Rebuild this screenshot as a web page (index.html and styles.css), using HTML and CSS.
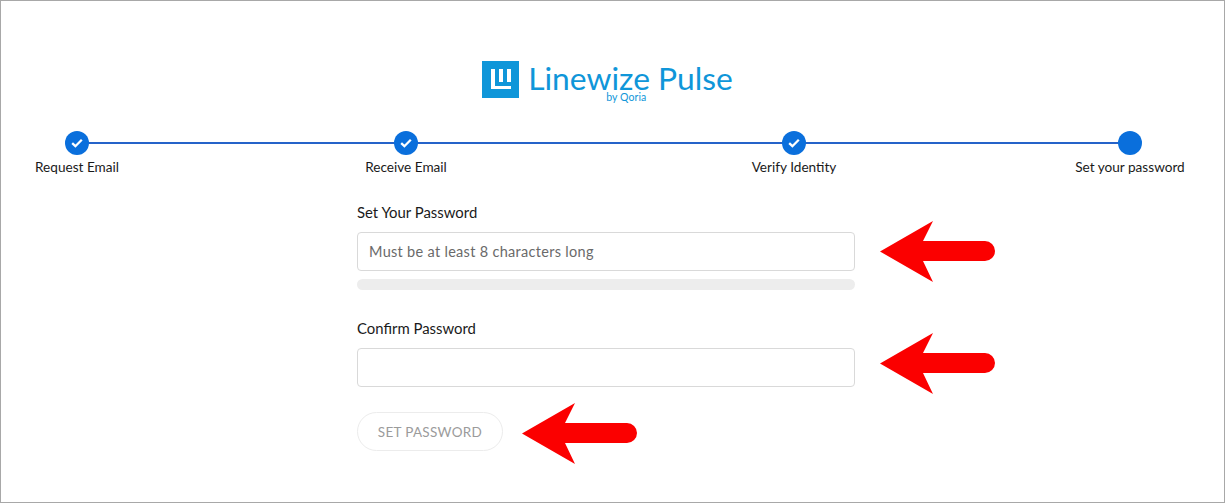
FILE: index.html
```html
<!DOCTYPE html>
<html lang="en">
<head>
<meta charset="utf-8">
<title>Set your password</title>
<link rel="stylesheet" href="styles.css">
</head>
<body>
<div class="frame">
  <header class="brand">
    <svg class="brand-mark" viewBox="0 0 37 37" aria-hidden="true">
      <rect width="37" height="37" fill="#0f96d9"/>
      <path d="M9 8h4v17h16v3H9z M17 8h4v13h-4z M25 8h4v13h-4z" fill="#fff"/>
    </svg>
    <div class="brand-text">
      <div class="brand-name">Linewize Pulse</div>
      <div class="brand-by">by Qoria</div>
    </div>
  </header>

  <ol class="stepper">
    <li class="step">
      <span class="dot"><svg viewBox="0 0 12 10"><path d="M1.2 5.2 4.4 8.2 10.8 1.8" fill="none" stroke="#fff" stroke-width="2.3"/></svg></span>
      <span class="step-label">Request Email</span>
    </li>
    <li class="step step-b">
      <span class="dot"><svg viewBox="0 0 12 10"><path d="M1.2 5.2 4.4 8.2 10.8 1.8" fill="none" stroke="#fff" stroke-width="2.3"/></svg></span>
      <span class="step-label">Receive Email</span>
    </li>
    <li class="step step-c">
      <span class="dot"><svg viewBox="0 0 12 10"><path d="M1.2 5.2 4.4 8.2 10.8 1.8" fill="none" stroke="#fff" stroke-width="2.3"/></svg></span>
      <span class="step-label">Verify Identity</span>
    </li>
    <li class="step step-d">
      <span class="dot"></span>
      <span class="step-label">Set your password</span>
    </li>
  </ol>

  <form class="form">
    <label class="field-label" for="pw">Set Your Password</label>
    <input class="input" id="pw" type="text" placeholder="Must be at least 8 characters long">
    <div class="meter"></div>
    <label class="field-label second" for="cpw">Confirm Password</label>
    <input class="input" id="cpw" type="text">
    <button class="submit" type="button">SET PASSWORD</button>
  </form>

  <svg class="arrow arrow-1" viewBox="0 0 115 61" aria-hidden="true"><path d="M0 30.5 53 0 43 20H105a10 10 0 0 1 0 20H43L53 61z" fill="#fb0000"/></svg>
  <svg class="arrow arrow-2" viewBox="0 0 115 61" aria-hidden="true"><path d="M0 30.5 53 0 43 20H105a10 10 0 0 1 0 20H43L53 61z" fill="#fb0000"/></svg>
  <svg class="arrow arrow-3" viewBox="0 0 115 61" aria-hidden="true"><path d="M0 30.5 53 0 43 20H105a10 10 0 0 1 0 20H43L53 61z" fill="#fb0000"/></svg>
</div>
</body>
</html>
```
FILE: styles.css
```css
* { box-sizing: border-box; }
html, body { margin: 0; padding: 0; background: #fff; }
body { font-family: "Lato", "Noto Sans", sans-serif; color: #1a1a1a; }
.frame {
  position: relative;
  width: 1225px;
  height: 503px;
  border: 1px solid #a8a8a8;
  overflow: hidden;
  padding-top: 60px;
}
.brand { display: flex; justify-content: center; gap: 9px; margin-left: -10px; height: 48px; }
.brand-mark { width: 37px; height: 37px; flex: none; }
.brand-text { display: flex; flex-direction: column; color: #0f96d9; font-family: "Lato", sans-serif; }
.brand-name { font-size: 31.8px; line-height: 34px; font-weight: 400; white-space: nowrap; }
.brand-by { font-size: 10.5px; line-height: 9px; font-weight: 400; letter-spacing: .1px; margin: -2px 0 0 77px; padding-left: 1px; }
.stepper {
  position: relative;
  list-style: none;
  display: flex;
  margin: 22px 0 0;
  padding: 0 0 0 21px;
}
.stepper::before {
  content: "";
  position: absolute;
  left: 76px;
  top: 11px;
  width: 1053px;
  height: 2px;
  background: #2563c9;
}
.step { position: relative; width: 110px; display: flex; flex-direction: column; align-items: center; }
.step-b { margin-left: 219px; }
.step-c { margin-left: 278px; }
.step-d { margin-left: 226px; }
.dot {
  width: 24px;
  height: 24px;
  border-radius: 50%;
  background: #0a6fdc;
  display: flex;
  align-items: center;
  justify-content: center;
}
.dot svg { width: 12px; height: 10px; }
.step-label { margin-top: 2px; font-size: 13.6px; line-height: 20px; white-space: nowrap; }
.form { width: 498px; margin: 25px 0 0 356px; display: flex; flex-direction: column; align-items: flex-start; }
.field-label { font-size: 14.9px; line-height: 20px; }
.second { margin-top: 28px; }
.input {
  display: block;
  width: 498px;
  height: 39px;
  margin-top: 10px;
  padding: 0 11px;
  border: 1px solid #d9d9d9;
  border-radius: 4px;
  font: 14.5px "Lato", sans-serif;
  letter-spacing: .3px;
  color: #333;
  background: #fff;
  outline: none;
}
.input::placeholder { color: #6a6a6a; opacity: 1; }
.meter { width: 498px; height: 11px; margin-top: 8px; border-radius: 6px; background: #ededed; }
.submit {
  margin-top: 25px;
  width: 146px;
  height: 39px;
  border: 1px solid #ececec;
  border-radius: 20px;
  background: #fff;
  color: #9b9b9b;
  font: 13.5px "Lato", sans-serif;
  letter-spacing: .3px;
  padding: 0;
}
.arrow { position: absolute; width: 115px; height: 61px; }
.arrow-1 { left: 879px; top: 220px; }
.arrow-2 { left: 879px; top: 332px; }
.arrow-3 { left: 521px; top: 402px; }
```
